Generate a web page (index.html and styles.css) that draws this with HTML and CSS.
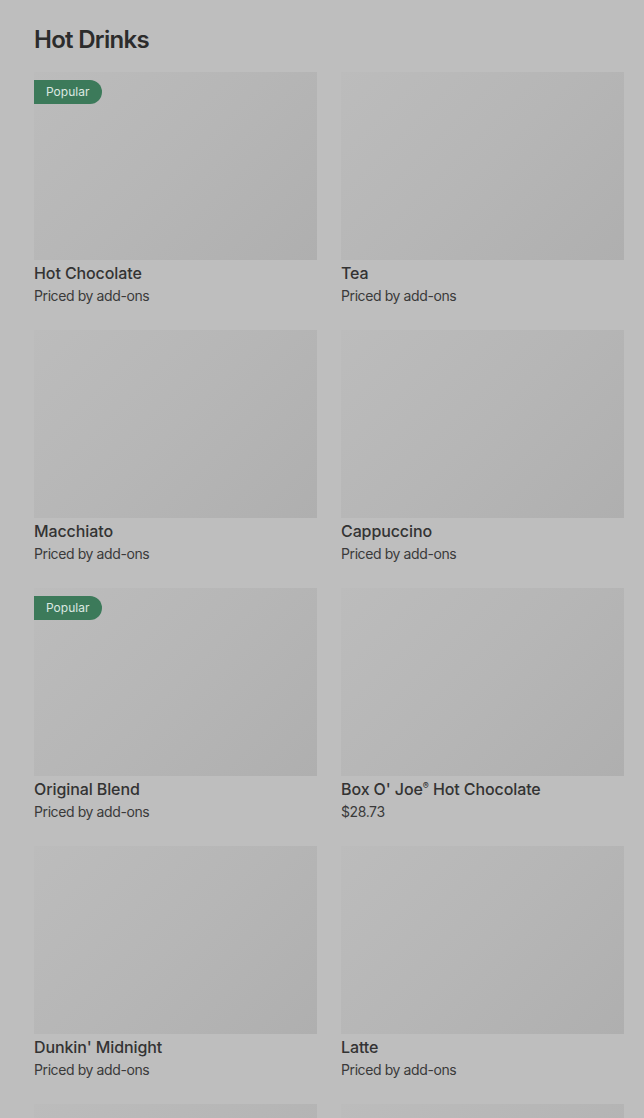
FILE: index.html
```html
<!DOCTYPE html>
<html>
<head>
<meta charset="utf-8">
<link rel="stylesheet" href="styles.css">
</head>
<body>
<main class="section">
  <h1 class="title">Hot Drinks</h1>
  <div class="grid">
    <div class="card"><div class="thumb"><span class="badge">Popular</span></div><div class="name">Hot Chocolate</div><div class="price">Priced by add-ons</div></div>
    <div class="card"><div class="thumb"></div><div class="name">Tea</div><div class="price">Priced by add-ons</div></div>
    <div class="card"><div class="thumb"></div><div class="name">Macchiato</div><div class="price">Priced by add-ons</div></div>
    <div class="card"><div class="thumb"></div><div class="name">Cappuccino</div><div class="price">Priced by add-ons</div></div>
    <div class="card"><div class="thumb"><span class="badge">Popular</span></div><div class="name">Original Blend</div><div class="price">Priced by add-ons</div></div>
    <div class="card"><div class="thumb"></div><div class="name">Box O' Joe<sup class="reg">®</sup> Hot Chocolate</div><div class="price">$28.73</div></div>
    <div class="card"><div class="thumb"></div><div class="name">Dunkin' Midnight</div><div class="price">Priced by add-ons</div></div>
    <div class="card"><div class="thumb"></div><div class="name">Latte</div><div class="price">Priced by add-ons</div></div>
    <div class="card"><div class="thumb"></div><div class="name">&nbsp;</div><div class="price">&nbsp;</div></div>
    <div class="card"><div class="thumb"></div><div class="name">&nbsp;</div><div class="price">&nbsp;</div></div>
  </div>
</main>
</body>
</html>
```

FILE: styles.css
```css
html, body {
  margin: 0;
  padding: 0;
  background: #bebebe;
  overflow: hidden;
}
body {
  font-family: Inter, "Liberation Sans", sans-serif;
  color: #2f2f2f;
}
.section {
  padding: 24px 20px 0 34px;
}
.title {
  margin: 0 0 16px 0;
  font-size: 24px;
  line-height: 32px;
  font-weight: 600;
  letter-spacing: -0.7px;
  color: #2c2c2c;
}
.grid {
  display: grid;
  grid-template-columns: 283px 283px;
  column-gap: 24px;
  row-gap: 24px;
}
.thumb {
  position: relative;
  height: 188px;
  background: linear-gradient(135deg, #bcbcbc 0%, #b6b6b6 50%, #afafaf 100%);
}
.badge {
  position: absolute;
  left: 0;
  top: 8px;
  height: 24px;
  line-height: 24px;
  padding: 0 13px 0 12px;
  background: #3c7a5a;
  color: #dce8e1;
  font-size: 12px;
  border-radius: 0 12px 12px 0;
}
.name {
  margin-top: 2px;
  font-size: 16px;
  line-height: 22px;
  font-weight: 500;
  letter-spacing: -0.1px;
  color: #333;
}
.reg {
  font-size: 9px;
  line-height: 0;
  vertical-align: 6px;
}
.price {
  margin-top: 2px;
  font-size: 14px;
  line-height: 20px;
  letter-spacing: -0.4px;
  color: #3a3a3a;
}
```
